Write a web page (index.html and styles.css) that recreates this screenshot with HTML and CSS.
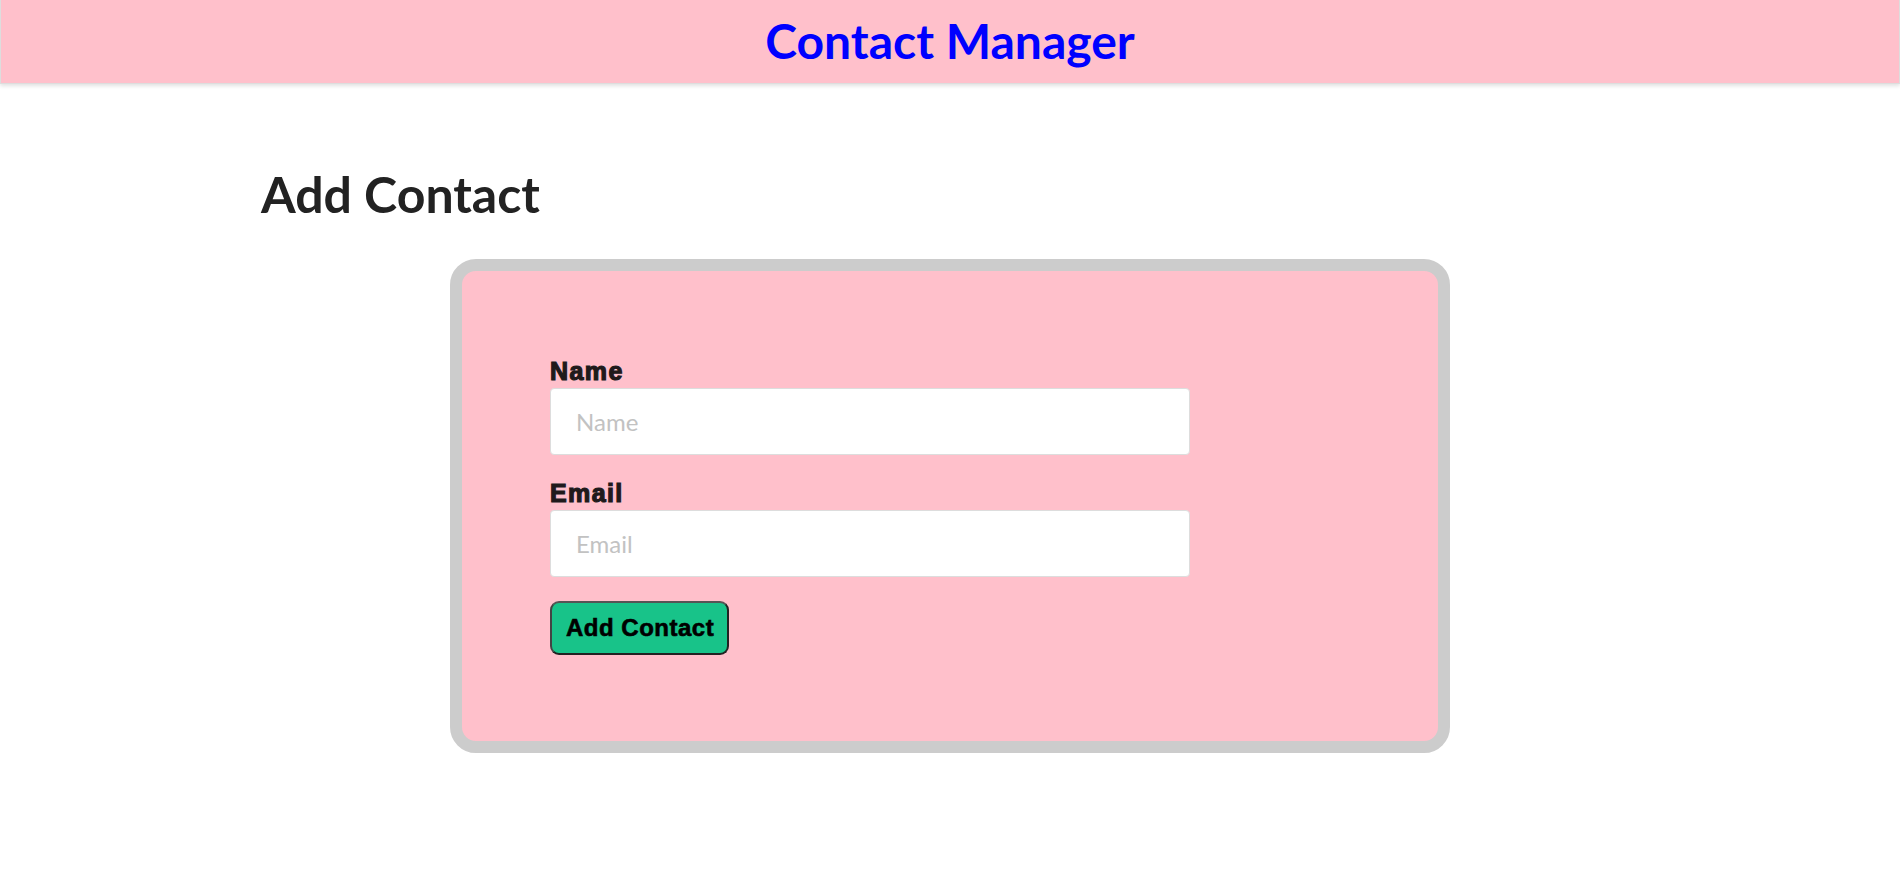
FILE: index.html
```html
<!DOCTYPE html>
<html lang="en">
<head>
<meta charset="utf-8">
<title>Contact Manager</title>
<link rel="stylesheet" href="styles.css">
</head>
<body>
<header class="topbar">
  <h1 class="topbar-title">Contact Manager</h1>
</header>
<main class="page">
  <h2 class="page-title">Add Contact</h2>
  <div class="card">
    <form class="form">
      <div class="field">
        <label class="field-label" for="name">Name</label>
        <input class="field-input" id="name" type="text" placeholder="Name">
      </div>
      <div class="field">
        <label class="field-label" for="email">Email</label>
        <input class="field-input" id="email" type="text" placeholder="Email">
      </div>
      <button class="btn" type="button">Add Contact</button>
    </form>
  </div>
</main>
</body>
</html>
```

FILE: styles.css
```css
html, body {
  margin: 0;
  padding: 0;
  background: #ffffff;
  font-family: Lato, "Liberation Sans", sans-serif;
}

.topbar {
  background: #ffc0cb;
  border: 1px solid #dddddd;
  border-top: none;
  box-shadow: 0 2px 4px rgba(0, 0, 0, 0.12);
  height: 84px;
  box-sizing: border-box;
  display: flex;
  justify-content: center;
  align-items: flex-start;
}

.topbar-title {
  margin: 12px 0 0;
  font-family: Lato, sans-serif;
  font-weight: 700;
  font-size: 48px;
  line-height: 1.2;
  color: #0000ff;
}

.page {
  padding: 0 261px;
}

.page-title {
  margin: 80px 0 35px;
  font-family: Lato, sans-serif;
  font-weight: 700;
  font-size: 50px;
  line-height: 60px;
  color: #222222;
}

.card {
  width: 1000px;
  margin: 0 auto;
  box-sizing: border-box;
  background: #ffc0cb;
  border: 12px solid #cccccc;
  border-radius: 26px;
  padding: 86px 88px 86px;
}

.form {
  display: flex;
  flex-direction: column;
  align-items: flex-start;
}

.field {
  display: flex;
  flex-direction: column;
  width: 80%;
  margin-bottom: 24px;
}

.field-label {
  font-family: "Liberation Sans", Arial, sans-serif;
  font-weight: 700;
  font-size: 25px;
  line-height: 28px;
  letter-spacing: 1.4px;
  color: #201a1b;
  -webkit-text-stroke: 1.2px #201a1b;
  margin-bottom: 3px;
}

.field-input {
  box-sizing: border-box;
  height: 67px;
  width: 100%;
  border: 1px solid #dddddd;
  border-radius: 4px;
  background: #ffffff;
  padding: 0 25px;
  font-family: Lato, sans-serif;
  font-size: 24px;
  color: #333333;
  outline: none;
}

.field-input::placeholder {
  color: #c2c2c2;
}

.btn {
  box-sizing: border-box;
  height: 54px;
  padding: 0 13px 0 14px;
  background: #18c389;
  border: 2px solid #222222;
  border-top-color: #555555;
  border-left-color: #444444;
  border-radius: 9px;
  font-family: "Liberation Sans", Arial, sans-serif;
  font-weight: 700;
  font-size: 24px;
  letter-spacing: 0.5px;
  color: #000000;
  -webkit-text-stroke: 0.6px #000000;
  cursor: pointer;
}
```
